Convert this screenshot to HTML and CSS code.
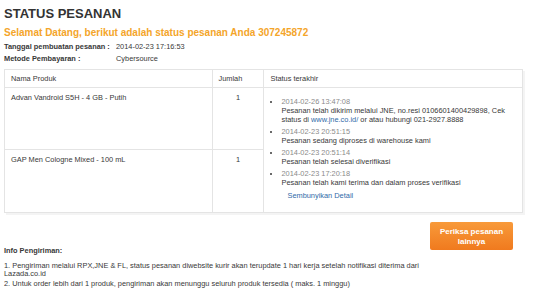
FILE: index.html
```html
<!DOCTYPE html>
<html lang="id">
<head>
<meta charset="utf-8">
<title>Status Pesanan</title>
<link rel="stylesheet" href="styles.css">
</head>
<body>
<div class="page">
  <h1 class="title">STATUS PESANAN</h1>
  <p class="welcome">Selamat Datang, berikut adalah status pesanan Anda 307245872</p>
  <div class="meta">
    <div class="meta-row"><span class="meta-label">Tanggal pembuatan pesanan :</span><span class="meta-value">2014-02-23 17:16:53</span></div>
    <div class="meta-row"><span class="meta-label">Metode Pembayaran :</span><span class="meta-value">Cybersource</span></div>
  </div>
  <table class="orders">
    <thead>
      <tr class="head-row">
        <th class="col-name">Nama Produk</th>
        <th class="col-qty">Jumlah</th>
        <th class="col-status">Status terakhir</th>
      </tr>
    </thead>
    <tbody>
      <tr class="row-1">
        <td class="cell">Advan Vandroid S5H - 4 GB - Putih</td>
        <td class="cell qty">1</td>
        <td class="cell status" rowspan="2">
          <ul class="history">
            <li><span class="date">2014-02-26 13:47:08</span><br>Pesanan telah dikirim melalui JNE, no.resi 0106601400429898, Cek status di <a class="link" href="#">www.jne.co.id/</a> or atau hubungi 021-2927.8888</li>
            <li><span class="date">2014-02-23 20:51:15</span><br>Pesanan sedang diproses di warehouse kami</li>
            <li><span class="date">2014-02-23 20:51:14</span><br>Pesanan telah selesai diverifikasi</li>
            <li><span class="date">2014-02-23 17:20:18</span><br>Pesanan telah kami terima dan dalam proses verifikasi</li>
          </ul>
          <a class="link hide" href="#">Sembunyikan Detail</a>
        </td>
      </tr>
      <tr class="row-2">
        <td class="cell">GAP Men Cologne Mixed - 100 mL</td>
        <td class="cell qty">1</td>
      </tr>
    </tbody>
  </table>
  <div class="bottom">
    <div class="info">
      <p class="info-title">Info Pengiriman:</p>
      <p class="info-text">1. Pengiriman melalui RPX,JNE &amp; FL, status pesanan diwebsite kurir akan terupdate 1 hari kerja setelah notifikasi diterima dari Lazada.co.id</p>
      <p class="info-text second">2. Untuk order lebih dari 1 produk, pengiriman akan menunggu seluruh produk tersedia ( maks. 1 minggu)</p>
    </div>
    <a class="btn" href="#">Periksa pesanan<br>lainnya</a>
  </div>
</div>
</body>
</html>
```
FILE: styles.css
```css
html, body {
  margin: 0;
  padding: 0;
  background: #fff;
}
body {
  font-family: "Liberation Sans", Arial, sans-serif;
  color: #383838;
  font-size: 7.4px;
}
.page {
  padding: 4px 4px 0 4px;
}
.title {
  margin: 2px 0 0 0;
  font-size: 13px;
  line-height: 16px;
  font-weight: bold;
  color: #333;
}
.welcome {
  margin: 5px 0 0 0;
  font-size: 10px;
  line-height: 12px;
  font-weight: bold;
  color: #f4a52a;
}
.meta {
  margin-top: 2px;
}
.meta-row {
  display: flex;
  line-height: 12px;
}
.meta-label {
  width: 112px;
  font-weight: bold;
}
.orders {
  margin-top: 4px;
  width: 519px;
  border-collapse: collapse;
  box-shadow: 2px 2px 0 #f4f4f4;
}
.orders th,
.orders td {
  border: 1px solid #e4e4e4;
  font-weight: normal;
  text-align: left;
  vertical-align: top;
  line-height: 9px;
}
.head-row th {
  height: 17px;
  padding: 0 0 0 6px;
  vertical-align: middle;
}
.col-name { width: 201px; }
.col-qty { width: 45px; }
.col-status { width: 252px; }
.cell {
  padding: 5px 0 0 6px;
}
.row-1 .cell { height: 56px; }
.row-2 .cell { height: 57px; }
.qty {
  text-align: center !important;
  padding-left: 0 !important;
}
.status {
  padding: 9px 0 0 11px !important;
}
.history {
  margin: 0;
  padding: 0 0 0 6px;
}
.history li {
  margin-bottom: 3px;
}
.date {
  color: #8a8a8a;
}
.link {
  color: #2f6aa8;
  text-decoration: none;
}
.hide {
  display: inline-block;
  margin-left: 12px;
  margin-top: 1px;
}
.bottom {
  display: flex;
  justify-content: space-between;
  align-items: flex-start;
  margin-top: 9px;
}
.info {
  width: 425px;
  padding-top: 24px;
}
.info-title {
  margin: 0;
  font-weight: bold;
  line-height: 9px;
}
.info-text {
  margin: 7px 0 0 0;
  line-height: 8px;
}
.info-text.second {
  margin-top: 2px;
}
.btn {
  display: block;
  width: 83px;
  height: 28px;
  margin-right: 23px;
  box-sizing: border-box;
  padding-top: 5px;
  background: linear-gradient(#f89a3a, #f07a1e);
  border-radius: 2px;
  color: #fff;
  font-weight: bold;
  font-size: 8px;
  line-height: 10px;
  text-align: center;
  text-decoration: none;
}
```
